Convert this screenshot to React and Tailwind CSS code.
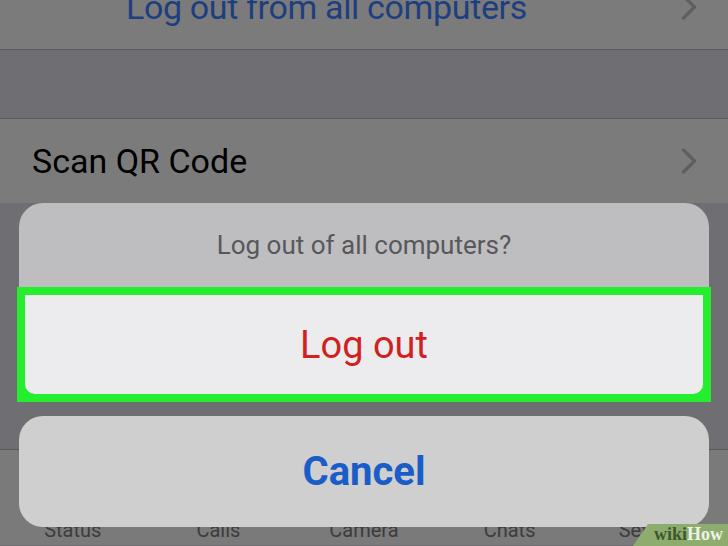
import React from "react";

function Chevron({ className }) {
  return (
    <svg width="16" height="26" viewBox="0 0 16 26" className={className} fill="none">
      <path d="M2.5 2 L13.5 13 L2.5 24" stroke="#5f5f61" strokeWidth="3.2" strokeLinecap="round" strokeLinejoin="round" />
    </svg>
  );
}

export default function App() {
  const tabs = ["Status", "Calls", "Camera", "Chats", "Settings"];
  return (
    <div className="relative w-[728px] h-[546px] overflow-hidden bg-[#6f6f73] font-['Roboto',sans-serif]">
      {/* underlying settings page (dimmed) */}
      <div className="flex flex-col">
        <div className="mt-[-35px] h-[84px] bg-[#7b7b7b] flex items-center pl-[126px] pr-[31px]">
          <span className="flex-1 text-[34px] leading-[34px] tracking-[-0.35px] text-[#1d3f80]">Log out from all computers</span>
          <Chevron />
        </div>
        <div className="h-px bg-[#5c5c5e]" />
        <div className="h-[68px] bg-[#6f6f73]" />
        <div className="h-px bg-[#5c5c5e]" />
        <div className="h-[84px] bg-[#7b7b7b] flex items-center pl-[32px] pr-[31px]">
          <span className="flex-1 text-[34px] leading-[34px] text-black">Scan QR Code</span>
          <Chevron />
        </div>
        <div className="h-[246px] bg-[#6f6f73]" />
        <div className="h-px bg-[#5a5a5c]" />
        <div className="h-[95px] bg-[#7a7a7a] flex flex-col justify-end pb-[5px]">
          <div className="grid grid-cols-5">
            {tabs.map((t) => (
              <span key={t} className="text-center text-[20px] leading-[20px] text-[#3c3c3e]">{t}</span>
            ))}
          </div>
        </div>
      </div>

      {/* action sheet overlay */}
      <div className="absolute left-[17px] top-[203px] w-[694px] flex flex-col">
        <div className="mx-[2px] h-[84px] rounded-t-[24px] bg-[#bebec0] flex items-center justify-center">
          <span className="text-[26px] leading-[26px] text-[#58585c]">Log out of all computers?</span>
        </div>
        <div className="h-[115px] bg-[#25ee2f] pt-[8px] px-[8px] pb-[8px]">
          <div className="h-full bg-[#ececee] rounded-b-[10px] flex items-center justify-center">
            <span className="text-[38px] leading-[38px] text-[#d21f1f]">Log out</span>
          </div>
        </div>
        <div className="mt-[14px] mx-[2px] h-[111px] rounded-[24px] bg-[#cfcfcf] flex items-center justify-center">
          <span className="text-[40px] leading-[40px] font-bold text-[#1a5cc8]">Cancel</span>
        </div>
      </div>

      {/* wikiHow watermark */}
      <div className="absolute right-0 bottom-0 w-[95px] h-[22px] bg-[#8dac6e] [clip-path:polygon(15px_0,100%_0,100%_100%,0_100%)] flex items-end justify-end pr-[5px] pb-[3px]">
        <span className="font-['Liberation_Serif',serif] font-bold text-[18px] leading-[18px]">
          <span className="text-[#3b5a2b]">wiki</span>
          <span className="text-[#eef3e8]">How</span>
        </span>
      </div>
    </div>
  );
}
